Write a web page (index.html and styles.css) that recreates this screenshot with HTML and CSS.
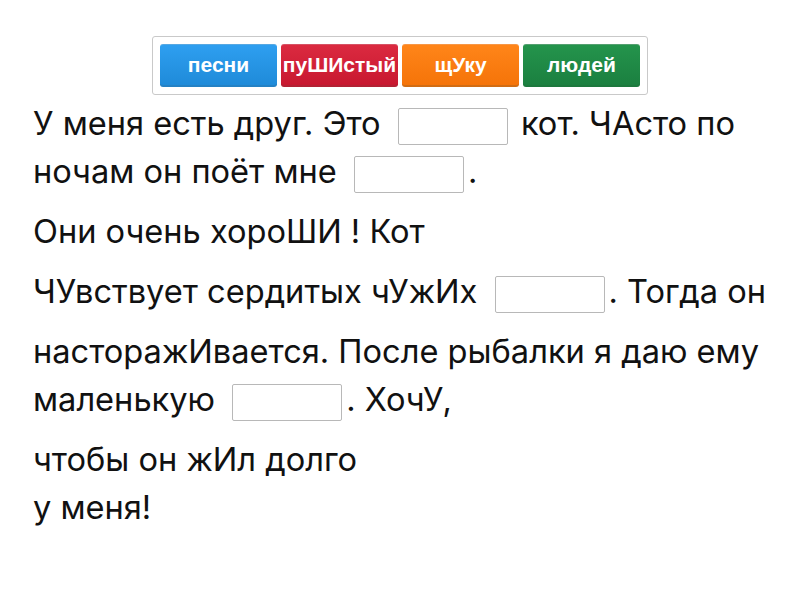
FILE: index.html
```html
<!DOCTYPE html>
<html lang="ru">
<head>
<meta charset="utf-8">
<link rel="stylesheet" href="styles.css">
</head>
<body>
<div class="bank">
  <span class="word blue">песни</span>
  <span class="word red">пуШИстый</span>
  <span class="word orange">щУку</span>
  <span class="word green">людей</span>
</div>
<div class="text">
  <p>У меня есть друг. Это <span class="blank"></span> кот. ЧАсто по ночам он поёт мне <span class="blank"></span>.</p>
  <p>Они очень хороШИ ! Кот</p>
  <p>ЧУвствует сердитых чУжИх <span class="blank"></span>. Тогда он</p>
  <p>насторажИвается. После рыбалки я даю ему маленькую <span class="blank"></span>. ХочУ,</p>
  <p>чтобы он жИл долго<br>у меня!</p>
</div>
</body>
</html>
```

FILE: styles.css
```css
body {
  margin: 0;
  font-family: Inter, "Noto Sans", sans-serif;
  color: #111;
  background: #fff;
}

.bank {
  display: flex;
  gap: 4px;
  width: max-content;
  margin: 36px auto 0;
  padding: 7px;
  border: 1px solid #c9c9c9;
  border-radius: 3px;
}

.word {
  box-sizing: border-box;
  width: 117px;
  height: 43px;
  display: flex;
  align-items: center;
  justify-content: center;
  border-radius: 3px;
  font-family: "Liberation Sans", Arial, sans-serif;
  font-weight: bold;
  font-size: 21px;
  color: #fff;
  border-top: 1px solid rgba(255, 255, 255, 0.25);
  border-bottom: 2px solid rgba(0, 0, 0, 0.18);
}

.blue { background: linear-gradient(#2e9ff0, #1f8bd9); }
.red { background: linear-gradient(#db2a40, #c81830); }
.orange { background: linear-gradient(#ff8519, #f57409); }
.green { background: linear-gradient(#24944c, #1b8040); }

.text {
  margin-top: 4px;
  padding: 0 16px 0 33px;
  font-size: 32.6px;
  line-height: 48px;
}

.text p {
  margin: 0 0 12px;
}

.blank {
  display: inline-block;
  box-sizing: border-box;
  width: 110px;
  height: 37px;
  margin: 0 4px 0 8px;
  border: 1px solid #b8b8b8;
  border-radius: 2px;
  vertical-align: middle;
  background: #fff;
}
```
